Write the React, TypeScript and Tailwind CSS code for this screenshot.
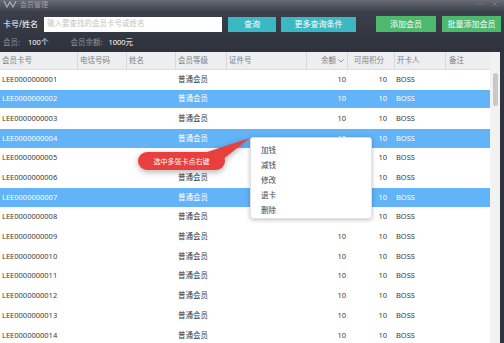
import { Minus, X } from 'lucide-react';

type Member = {
  card: string;
  selected: boolean;
};

const members: Member[] = Array.from({ length: 14 }, (_, i) => ({
  card: `LEE${String(i + 1).padStart(10, '0')}`,
  selected: [1, 3, 6].includes(i),
}));

const font = { fontFamily: '"Noto Sans", "Noto Sans CJK SC", sans-serif' };

const HeaderCell = ({ w, children, right }: { w: string; children?: React.ReactNode; right?: boolean }) => (
  <div className={`${w} h-full flex items-center border-r border-[#d6d9dc] px-[2px] ${right ? 'justify-end' : ''}`}>
    {children}
  </div>
);

export default function App() {
  return (
    <div
      className="relative w-[504px] h-[343px] overflow-hidden bg-[#2f3440] text-[7.5px] leading-none"
      style={font}
    >
      {/* title bar */}
      <div className="h-[12px] bg-gradient-to-b from-[#686c74] to-[#3a3f4a] flex items-center px-[3px] text-[#9a9ea6] text-[7px]">
        <svg width="14" height="8" viewBox="0 0 14 8" className="mr-[3px] -mt-[4px]">
          <path d="M1 1 L4 7 L7 2 L10 7 L13 1" fill="none" stroke="#a4a8b0" strokeWidth="1.3" />
        </svg>
        <span className="-mt-[4px]">会员管理</span>
        <div className="ml-auto flex items-center gap-[7px] text-[#8c9098] -mt-[4px] pr-[2px]">
          <Minus size={8} strokeWidth={1.5} />
          <X size={8} strokeWidth={1.5} />
        </div>
      </div>

      {/* toolbar */}
      <div className="bg-gradient-to-b from-[#3a3f4a] to-[#2d323d]">
        <div className="flex items-center h-[22px] pl-[3px] pr-[3px] pt-[2px]">
          <span className="text-[8px] text-white w-[41px]">卡号/姓名</span>
          <div className="w-[178px] h-[15px] bg-white flex items-center px-[3px] text-[7.5px] text-[#c4c4c4]">
            输入要查找的会员卡号或姓名
          </div>
          <button className="ml-[6px] w-[48px] h-[15px] bg-[#3ab9c4] text-white text-[8px]">查询</button>
          <button className="ml-[5px] w-[75px] h-[15px] bg-[#3ab9c4] text-white text-[8px]">更多查询条件</button>
          <button className="ml-[20px] w-[60px] h-[16px] bg-[#4cb96c] text-white text-[8px]">添加会员</button>
          <button className="ml-[6px] w-[59px] h-[16px] bg-[#4cb96c] text-white text-[8px]">批量添加会员</button>
        </div>
        <div className="flex items-center h-[18px] pl-[3px] text-[7.5px]">
          <span className="text-[#8b909a]">会员:</span>
          <span className="ml-[8px] text-white">100个</span>
          <span className="ml-[22px] text-[#8b909a]">会员余额:</span>
          <span className="ml-[6px] text-white">1000元</span>
        </div>
      </div>

      {/* table */}
      <div className="flex w-[500px] bg-white">
        <div className="w-[490px]">
          <div className="flex h-[18px] bg-[#eceef0] text-[#7d8187] border-b border-[#dcdfe2]">
            <HeaderCell w="w-[78px]">会员卡号</HeaderCell>
            <HeaderCell w="w-[49px]">电话号码</HeaderCell>
            <HeaderCell w="w-[49px]">姓名</HeaderCell>
            <HeaderCell w="w-[51px]">会员等级</HeaderCell>
            <HeaderCell w="w-[80px]">证件号</HeaderCell>
            <HeaderCell w="w-[41px]" right>
              <span>余额</span>
              <svg width="6" height="4" viewBox="0 0 6 4" className="ml-[2px] mr-[1px]">
                <path d="M0.5 0.5 L3 3 L5.5 0.5" fill="none" stroke="#3ab9c4" strokeWidth="1" />
              </svg>
            </HeaderCell>
            <HeaderCell w="w-[47px]">
              <span className="ml-[4px]">可用积分</span>
            </HeaderCell>
            <HeaderCell w="w-[51px]">开卡人</HeaderCell>
            <div className="flex-1 flex items-center px-[3px]">备注</div>
          </div>
          {members.map((m) => (
            <div
              key={m.card}
              className={`flex h-[19.7px] items-center border-b border-white ${
                m.selected ? 'bg-[#62b3f7] text-white' : 'bg-white text-[#3a3a3a]'
              }`}
            >
              <div className="w-[178px] pl-[2px]">{m.card}</div>
              <div className="w-[129px]">普通会员</div>
              <div className="w-[39px] text-right">10</div>
              <div className="w-[41px] text-right">10</div>
              <div className="pl-[9px]">BOSS</div>
            </div>
          ))}
        </div>
        <div className="w-[10px] bg-[#f2f2f2] pt-[21px] pl-[3px]">
          <div className="w-[5px] h-[33px] rounded-full bg-[#c8c8c8]" />
        </div>
      </div>

      {/* hint bubble */}
      <div className="absolute left-[136px] top-[136px] pointer-events-none">
        <svg width="118" height="38" viewBox="0 0 118 38" className="drop-shadow-[0_2px_3px_rgba(0,0,0,0.3)]">
          <path d="M68 17 L114 2 L86 24 Z" fill="#ea3f3f" />
          <rect x="2" y="16" width="87" height="18" rx="9" fill="#ea3f3f" />
        </svg>
        <div className="absolute left-[2px] top-[16px] w-[87px] h-[18px] flex items-center justify-center text-white text-[7px]">
          选中多张卡点右键
        </div>
      </div>

      {/* context menu */}
      <div className="absolute left-[250px] top-[137px] w-[122px] h-[82px] bg-white rounded-[3px] border border-[#e2e2e2] shadow-[0_1px_4px_rgba(0,0,0,0.25)] pt-[5px] text-[#444] text-[7.5px]">
        {['加钱', '减钱', '修改', '退卡', '删除'].map((t) => (
          <div key={t} className="h-[15px] flex items-center pl-[10px]">
            {t}
          </div>
        ))}
      </div>
    </div>
  );
}
